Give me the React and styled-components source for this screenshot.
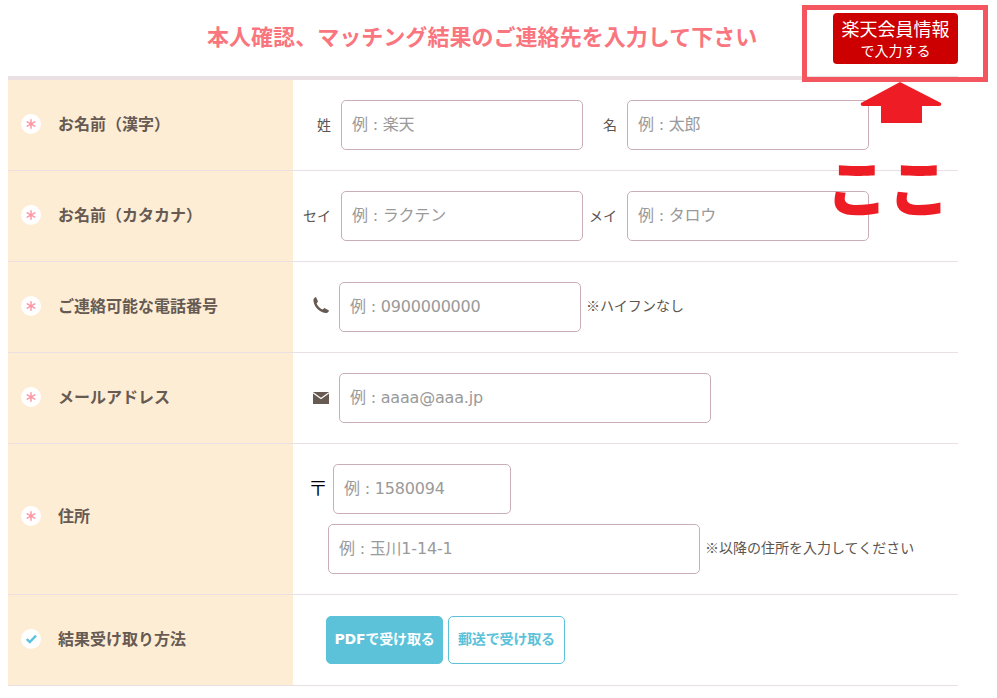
import React from "react";
import styled, { createGlobalStyle } from "styled-components";

const FONT = `"DejaVu Sans", "Noto Sans CJK JP", sans-serif`;
const CJK = `"Noto Sans CJK JP", sans-serif`;
const INK = "#665a52";

const Global = createGlobalStyle`
  html, body { margin: 0; padding: 0; background: #fff; }
  body { font-family: ${FONT}; overflow: hidden; }
`;

const Page = styled.div`
  position: relative;
  width: 997px;
  height: 698px;
  padding: 0 39px 0 8px;
  box-sizing: border-box;
`;

const Header = styled.header`
  height: 76px;
  box-sizing: content-box;
  border-bottom: 4px solid #eae0e4;
  display: flex;
  align-items: flex-start;
  justify-content: space-between;
  padding-left: 199px;
`;

const Title = styled.h1`
  margin: 22px 0 0;
  font-size: 22px;
  line-height: 32px;
  font-weight: 700;
  letter-spacing: 0.04px;
  color: #f9767f;
  white-space: nowrap;
`;

const RakutenButton = styled.button`
  margin-top: 13px;
  width: 125px;
  height: 51px;
  padding: 0 0 1px;
  border: 0;
  border-radius: 4px;
  background: #cc0000;
  color: #fff;
  font-family: ${FONT};
  display: flex;
  flex-direction: column;
  align-items: center;
  justify-content: center;
`;

const ButtonMain = styled.span`
  font-size: 18px;
  line-height: 25px;
`;

const ButtonSub = styled.span`
  font-size: 14px;
  line-height: 18px;
`;

const Row = styled.div`
  display: flex;
  border-bottom: 1px solid #eae0e4;
  height: ${(p) => p.$h || 90}px;
`;

const Head = styled.div`
  width: 285px;
  flex: none;
  background: #feedd5;
  display: flex;
  align-items: center;
  padding-left: 13px;
  padding-bottom: ${(p) => p.$lift || 2}px;
  box-sizing: border-box;
  gap: 17px;
`;

const Badge = styled.span`
  width: 20px;
  height: 20px;
  border-radius: 50%;
  background: #fff;
  display: flex;
  align-items: center;
  justify-content: center;
  flex: none;
`;

const Label = styled.span`
  font-size: 16px;
  font-weight: 700;
  padding-bottom: 2px;
  color: ${INK};
`;

const Body = styled.div`
  flex: 1;
  display: flex;
  flex-direction: column;
  justify-content: center;
  gap: 10px;
`;

const Line = styled.div`
  display: flex;
  align-items: center;
  padding-left: ${(p) => p.$pad || 0}px;
`;

const FieldLabel = styled.span`
  width: ${(p) => p.$w}px;
  margin-right: 10px;
  padding-bottom: 3px;
  text-align: right;
  font-size: 14px;
  color: #5b5550;
  flex: none;
  white-space: nowrap;
`;

const IconSlot = styled.span`
  width: ${(p) => p.$w}px;
  margin-left: ${(p) => p.$left}px;
  padding-bottom: ${(p) => p.$raise || 0}px;
  flex: none;
  display: flex;
  align-items: center;
`;

const Postal = styled(IconSlot)`
  color: #000;
  font-family: ${CJK};
  font-size: 20px;
  font-weight: 300;
`;

const Input = styled.input`
  width: ${(p) => p.$w}px;
  height: 50px;
  box-sizing: border-box;
  padding: 0 10px 2px;
  flex: none;
  border: 1px solid #c9aeb8;
  border-radius: 5px;
  background: #fff;
  font-family: ${FONT};
  font-size: 16px;
  letter-spacing: -0.2px;
  outline: none;
  &::placeholder { color: #9a9a9a; opacity: 1; }
`;

const Note = styled.span`
  margin-left: 5px;
  padding-bottom: 4px;
  font-family: ${CJK};
  font-size: 14px;
  color: #5b5550;
  white-space: nowrap;
`;

const Choices = styled.div`
  display: flex;
  gap: 5px;
  padding-left: 33px;
`;

const Choice = styled.button`
  width: 117px;
  height: 48px;
  padding: 0 0 4px;
  box-sizing: border-box;
  border: 1px solid #5bc2d9;
  border-radius: 5px;
  background: ${(p) => (p.$on ? "#5bc2d9" : "#fff")};
  color: ${(p) => (p.$on ? "#fff" : "#5bc2d9")};
  font-family: ${FONT};
  font-size: 14px;
  font-weight: 700;
  letter-spacing: -0.15px;
  white-space: nowrap;
`;

const Callout = styled.div`
  position: absolute;
  left: 802px;
  top: 5px;
  width: 186px;
  height: 77px;
  box-sizing: border-box;
  border: 5px solid #f4565f;
  pointer-events: none;
`;

const Arrow = styled.svg`
  position: absolute;
  left: 860px;
  top: 82px;
`;

const Here = styled.div`
  position: absolute;
  left: 826px;
  top: 143px;
  font-family: ${CJK};
  font-size: 62px;
  line-height: 84px;
  font-weight: 900;
  color: #ee1c25;
  white-space: nowrap;
`;

const Required = () => (
  <Badge>
    <svg width="10" height="10" viewBox="0 0 10 10" fill="none" stroke="#fb98a6" strokeWidth="1.5" strokeLinecap="round">
      <path d="M5 .8v8.4M1.2 2.8l7.6 4.4M8.8 2.8L1.2 7.2" />
    </svg>
  </Badge>
);

const Checked = () => (
  <Badge>
    <svg width="11" height="10" viewBox="0 0 11 10" fill="none" stroke="#5bc2e0" strokeWidth="2.4">
      <path d="M.8 5l3 3L10 1.6" />
    </svg>
  </Badge>
);

const PhoneIcon = () => (
  <svg width="16" height="16" viewBox="0 0 16 16" fill={INK}>
    <path d="M3 0L5 4.5 3.6 6.5C4.5 9 7 11.5 9.5 12.5L11.5 11 16 13.5C15.6 15.4 14 16 12.5 16 6 15 1 10 .4 3.5.4 1.5 1.5.5 3 0Z" />
  </svg>
);

const MailIcon = () => (
  <svg width="16" height="12" viewBox="0 0 16 12">
    <rect width="16" height="12" fill={INK} />
    <path d="M0 .8L8 6.6 16 .8" fill="none" stroke="#fff" strokeWidth="1.2" />
  </svg>
);

export default function App() {
  return (
    <Page>
      <Global />
      <Header>
        <Title>本人確認、マッチング結果のご連絡先を入力して下さい</Title>
        <RakutenButton>
          <ButtonMain>楽天会員情報</ButtonMain>
          <ButtonSub>で入力する</ButtonSub>
        </RakutenButton>
      </Header>

      <Row>
        <Head><Required /><Label>お名前（漢字）</Label></Head>
        <Body>
          <Line>
            <FieldLabel $w={38}>姓</FieldLabel>
            <Input $w={242} placeholder="例 : 楽天" />
            <FieldLabel $w={34}>名</FieldLabel>
            <Input $w={242} placeholder="例 : 太郎" />
          </Line>
        </Body>
      </Row>

      <Row>
        <Head><Required /><Label>お名前（カタカナ）</Label></Head>
        <Body>
          <Line>
            <FieldLabel $w={38}>セイ</FieldLabel>
            <Input $w={242} placeholder="例 : ラクテン" />
            <FieldLabel $w={34}>メイ</FieldLabel>
            <Input $w={242} placeholder="例 : タロウ" />
          </Line>
        </Body>
      </Row>

      <Row>
        <Head><Required /><Label>ご連絡可能な電話番号</Label></Head>
        <Body>
          <Line>
            <IconSlot $left={20} $w={26} $raise={4}><PhoneIcon /></IconSlot>
            <Input $w={242} placeholder="例 : 0900000000" />
            <Note>※ハイフンなし</Note>
          </Line>
        </Body>
      </Row>

      <Row>
        <Head><Required /><Label>メールアドレス</Label></Head>
        <Body>
          <Line>
            <IconSlot $left={20} $w={26}><MailIcon /></IconSlot>
            <Input $w={372} placeholder="例 : aaaa@aaa.jp" />
          </Line>
        </Body>
      </Row>

      <Row $h={150}>
        <Head $lift={6}><Required /><Label>住所</Label></Head>
        <Body>
          <Line>
            <Postal $left={15} $w={25} $raise={3}>〒</Postal>
            <Input $w={178} placeholder="例 : 1580094" />
          </Line>
          <Line $pad={35}>
            <Input $w={372} placeholder="例 : 玉川1-14-1" />
            <Note>※以降の住所を入力してください</Note>
          </Line>
        </Body>
      </Row>

      <Row>
        <Head><Checked /><Label>結果受け取り方法</Label></Head>
        <Body>
          <Choices>
            <Choice $on>PDFで受け取る</Choice>
            <Choice>郵送で受け取る</Choice>
          </Choices>
        </Body>
      </Row>

      <Callout />
      <Arrow width="82" height="42" viewBox="0 0 82 42">
        <path d="M40 0L81 21Q82 24 79 24H62V41H21V24H3Q0 24 1 21Z" fill="#ee1c25" />
      </Arrow>
      <Here>ここ</Here>
    </Page>
  );
}
